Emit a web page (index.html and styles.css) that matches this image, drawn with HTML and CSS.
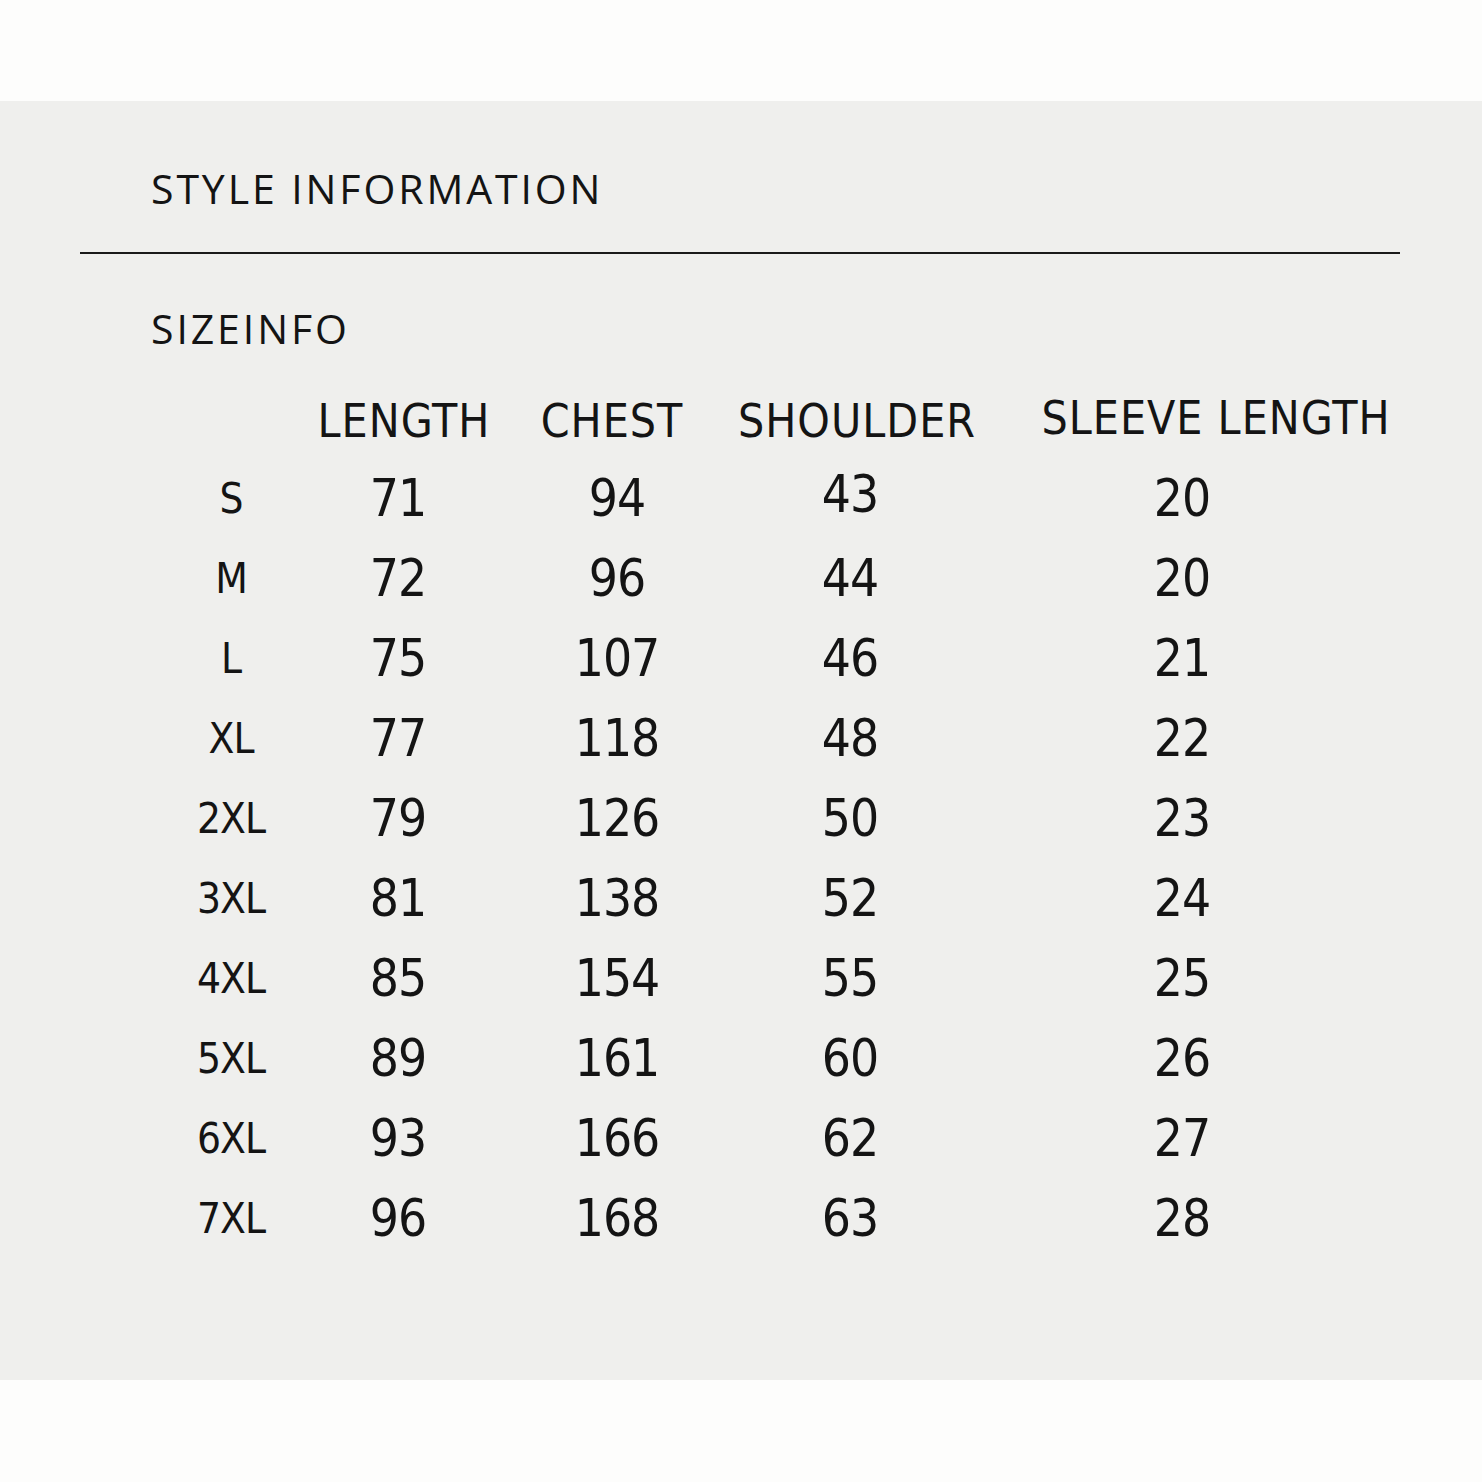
FILE: index.html
```html
<!DOCTYPE html>
<html>
<head>
<meta charset="utf-8">
<link rel="stylesheet" href="styles.css">
</head>
<body>
<div class="top-space"></div>
<section class="panel">
  <h1 class="title">STYLE INFORMATION</h1>
  <hr class="rule">
  <h2 class="subtitle">SIZEINFO</h2>
  <div class="size-table">
    <div class="hd"></div>
    <div class="hd h-length">LENGTH</div>
    <div class="hd h-chest">CHEST</div>
    <div class="hd h-shoulder">SHOULDER</div>
    <div class="hd h-sleeve">SLEEVE LENGTH</div>

    <div class="sz">S</div><div class="v">71</div><div class="v">94</div><div class="v up">43</div><div class="v">20</div>
    <div class="sz">M</div><div class="v">72</div><div class="v">96</div><div class="v">44</div><div class="v">20</div>
    <div class="sz">L</div><div class="v">75</div><div class="v">107</div><div class="v">46</div><div class="v">21</div>
    <div class="sz">XL</div><div class="v">77</div><div class="v">118</div><div class="v">48</div><div class="v">22</div>
    <div class="sz">2XL</div><div class="v">79</div><div class="v">126</div><div class="v">50</div><div class="v">23</div>
    <div class="sz">3XL</div><div class="v">81</div><div class="v">138</div><div class="v">52</div><div class="v">24</div>
    <div class="sz">4XL</div><div class="v">85</div><div class="v">154</div><div class="v">55</div><div class="v">25</div>
    <div class="sz">5XL</div><div class="v">89</div><div class="v">161</div><div class="v">60</div><div class="v">26</div>
    <div class="sz">6XL</div><div class="v">93</div><div class="v">166</div><div class="v">62</div><div class="v">27</div>
    <div class="sz">7XL</div><div class="v">96</div><div class="v">168</div><div class="v">63</div><div class="v">28</div>
  </div>
</section>
</body>
</html>
```

FILE: styles.css
```css
html, body {
  margin: 0;
  padding: 0;
  background: #fdfdfc;
}

.top-space {
  height: 101px;
}

.panel {
  box-sizing: border-box;
  height: 1279px;
  background: #efefed;
  padding-top: 62px;
  color: #141414;
}

.title,
.subtitle {
  margin: 0;
  padding-left: 151px;
  font-family: "Open Sans", "Noto Sans", sans-serif;
  font-weight: 400;
  font-size: 41px;
  line-height: 50px;
  letter-spacing: 2.9px;
}

.rule {
  margin: 39px 82px 0 80px;
  height: 2px;
  border: 0;
  background: #1a1a1a;
}

.subtitle {
  margin-top: 49px;
}

.size-table {
  margin-top: 31px;
  margin-left: 160px;
  display: grid;
  grid-template-columns: 142px 192px 246px 220px 444px;
  grid-template-rows: 75px repeat(10, 80px);
  font-family: "DejaVu Sans Condensed", "Liberation Sans Narrow", sans-serif;
  text-align: center;
}

.hd {
  display: flex;
  justify-content: center;
  font-size: 46px;
  line-height: 75px;
  letter-spacing: 1px;
  white-space: nowrap;
}

.h-length { padding-left: 12px; }
.h-chest { padding-right: 10px; }
.h-shoulder { padding-left: 14px; }
.h-sleeve { padding-left: 68px; line-height: 68px; }

.sz {
  font-size: 42px;
  line-height: 80px;
  letter-spacing: -1px;
}

.v {
  font-size: 51px;
  line-height: 80px;
  letter-spacing: -1px;
}

.v.up {
  line-height: 72px;
}
```
